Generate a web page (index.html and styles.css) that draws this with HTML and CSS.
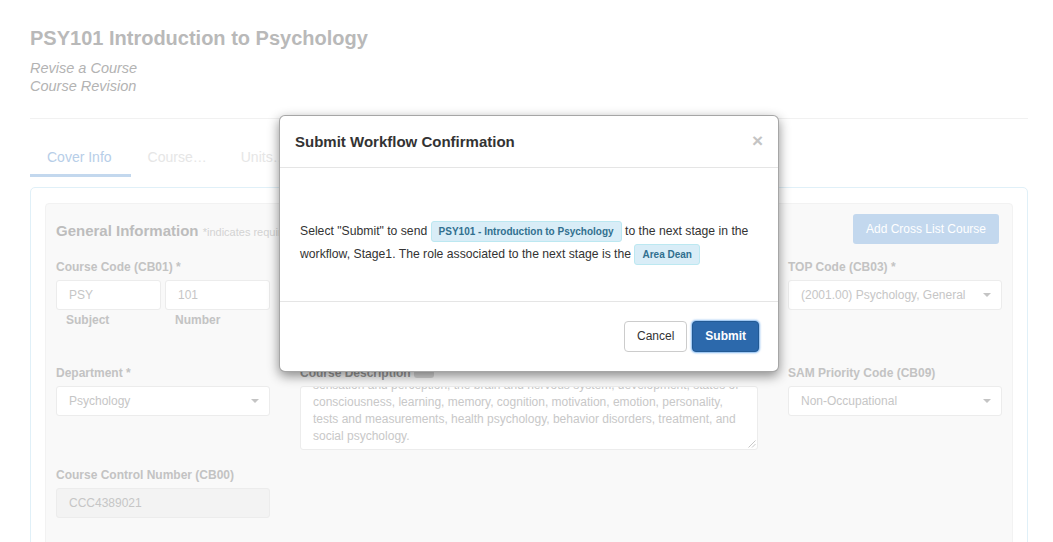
FILE: index.html
```html
<!DOCTYPE html>
<html lang="en">
<head>
<meta charset="utf-8">
<title>PSY101 Introduction to Psychology</title>
<link rel="stylesheet" href="styles.css">
</head>
<body>
<div class="page">
  <header class="page-head">
    <h1 class="title">PSY101 Introduction to Psychology</h1>
    <div class="subtitle">Revise a Course</div>
    <div class="subtitle">Course Revision</div>
  </header>
  <hr class="rule">
  <nav class="tabs">
    <div class="tab tab-active">Cover Info</div>
    <div class="tab">Course…</div>
    <div class="tab">Units…</div>
  </nav>
  <section class="card">
    <div class="panel">
      <div class="row-head">
        <h2 class="section-title">General Information <span class="req-note">*indicates required field</span></h2>
        <button class="btn-cross" type="button">Add Cross List Course</button>
      </div>
      <div class="grid row-2">
        <div class="field">
          <label class="label">Course Code (CB01) *</label>
          <div class="pair">
            <div class="pair-item">
              <div class="input">PSY</div>
              <div class="sublabel">Subject</div>
            </div>
            <div class="pair-item">
              <div class="input">101</div>
              <div class="sublabel">Number</div>
            </div>
          </div>
        </div>
        <div class="field"></div>
        <div class="field">
          <label class="label">TOP Code (CB03) *</label>
          <div class="input select"><span>(2001.00) Psychology, General</span><span class="caret"></span></div>
        </div>
      </div>
      <div class="grid row-3">
        <div class="field">
          <label class="label">Department *</label>
          <div class="input select"><span>Psychology</span><span class="caret"></span></div>
        </div>
        <div class="field">
          <label class="label label-dark">Course Description <span class="mini-badge"></span></label>
          <div class="textarea">
            <div class="textarea-text">
              <div>sensation and perception, the brain and nervous system, development, states of</div>
              <div>consciousness, learning, memory, cognition, motivation, emotion, personality,</div>
              <div>tests and measurements, health psychology, behavior disorders, treatment, and</div>
              <div>social psychology.</div>
            </div>
            <svg class="grip" width="9" height="9" viewBox="0 0 9 9"><path d="M8.5 1.5 L1.5 8.5 M8.5 5 L5 8.5" stroke="#c8c8c8" stroke-width="1" fill="none"/></svg>
          </div>
        </div>
        <div class="field">
          <label class="label">SAM Priority Code (CB09)</label>
          <div class="input select"><span>Non-Occupational</span><span class="caret"></span></div>
        </div>
      </div>
      <div class="grid row-4">
        <div class="field">
          <label class="label">Course Control Number (CB00)</label>
          <div class="input input-disabled">CCC4389021</div>
        </div>
      </div>
    </div>
  </section>

  <div class="modal" role="dialog">
    <div class="modal-header">
      <h3 class="modal-title">Submit Workflow Confirmation</h3>
      <span class="close">×</span>
    </div>
    <div class="modal-body">
      Select "Submit" to send <span class="badge">PSY101 - Introduction to Psychology</span> to the next stage in the workflow, Stage1. The role associated to the next stage is the <span class="badge">Area Dean</span>
    </div>
    <div class="modal-footer">
      <button class="btn btn-default" type="button">Cancel</button>
      <button class="btn btn-primary" type="button">Submit</button>
    </div>
  </div>
</div>
</body>
</html>
```

FILE: styles.css
```css
* { box-sizing: border-box; }

html, body {
  margin: 0;
  background: #ffffff;
  font-family: "Liberation Sans", Arial, sans-serif;
  overflow: hidden;
}

.page {
  position: relative;
  padding: 26px 25px 40px 30px;
  min-height: 542px;
}

.title {
  margin: 0;
  font-size: 20px;
  line-height: 24px;
  font-weight: bold;
  color: #b9b9b9;
}

.page-head .title { margin-bottom: 9px; }

.subtitle {
  font-size: 14.5px;
  line-height: 18px;
  font-style: italic;
  color: #b3b3b3;
}

.rule {
  margin: 23px 0 0 0;
  border: 0;
  border-top: 1px solid #f1f1f1;
  height: 0;
}

.tabs {
  display: flex;
  margin-top: 28px;
}

.tab {
  padding: 0 17px 7px 17px;
  font-size: 14px;
  line-height: 20px;
  color: #e6e6e6;
  border-bottom: 3px solid transparent;
}

.tab-active {
  padding: 0 19px 7px 17px;
  color: #b7cee8;
  border-bottom-color: #c3d8ee;
}

.card {
  margin-top: 10px;
  border: 1px solid #e0f0f8;
  border-radius: 5px;
  padding: 15px 14px 14px 14px;
}

.panel {
  background: #f9f9f9;
  border: 1px solid #f2f2f2;
  border-radius: 4px;
  padding: 10px 10px 40px 10px;
}

.row-head {
  display: flex;
  justify-content: space-between;
  align-items: flex-start;
  height: 30px;
}

.section-title {
  margin: 7px 0 0 0;
  font-size: 15px;
  line-height: 20px;
  font-weight: bold;
  color: #bdbdbd;
}

.req-note {
  font-size: 11px;
  font-weight: normal;
  color: #d3d3d3;
}

.btn-cross {
  margin-right: 3px;
  height: 30px;
  padding: 0 13px;
  border: 0;
  border-radius: 3px;
  background: #c3d8ee;
  color: #ffffff;
  font-family: "Liberation Sans", Arial, sans-serif;
  font-size: 12px;
}

.grid {
  display: grid;
  grid-template-columns: 214px 1fr 214px;
  column-gap: 30px;
}

.row-2 { margin-top: 15px; }
.row-3 { margin-top: 37px; }
.row-4 { margin-top: 17px; }

.label {
  display: block;
  font-size: 12px;
  line-height: 16px;
  font-weight: bold;
  color: #c3c3c3;
  margin-bottom: 5px;
  white-space: nowrap;
}

.label-dark { color: #9a9a9a; }

.mini-badge {
  display: inline-block;
  width: 20px;
  height: 8px;
  border-radius: 3px;
  background: #d6d6d6;
  vertical-align: middle;
}

.input {
  height: 30px;
  background: #ffffff;
  border: 1px solid #ececec;
  border-radius: 3px;
  padding: 0 12px;
  font-size: 12px;
  line-height: 28px;
  color: #c6c6c6;
  white-space: nowrap;
  overflow: hidden;
}

.input-disabled { background: #f3f3f3; }

.select {
  display: flex;
  align-items: center;
  justify-content: space-between;
  padding-right: 10px;
}

.caret {
  width: 0;
  height: 0;
  border-left: 4px solid transparent;
  border-right: 4px solid transparent;
  border-top: 4px solid #c4c4c4;
}

.pair {
  display: grid;
  grid-template-columns: 1fr 1fr;
  column-gap: 4px;
}

.sublabel {
  margin-top: 2px;
  padding-left: 10px;
  font-size: 12px;
  line-height: 16px;
  font-weight: bold;
  color: #c3c3c3;
}

.textarea {
  position: relative;
  height: 64px;
  background: #ffffff;
  border: 1px solid #ececec;
  border-radius: 3px;
  padding: 0 12px;
  overflow: hidden;
}

.textarea-text {
  margin-top: -10px;
  font-size: 12px;
  line-height: 17px;
  color: #c8c8c8;
  white-space: nowrap;
}

.grip {
  position: absolute;
  right: 1px;
  bottom: 1px;
}

/* Modal dialog lying over the page */
.modal {
  position: absolute;
  top: 115px;
  left: 279px;
  width: 500px;
  background: #ffffff;
  border: 1px solid rgba(0, 0, 0, 0.35);
  border-radius: 6px;
  box-shadow: 0 4px 12px rgba(0, 0, 0, 0.45);
}

.modal-header {
  display: flex;
  justify-content: space-between;
  align-items: center;
  padding: 16px 15px 15px 15px;
  border-bottom: 1px solid #e5e5e5;
}

.modal-title {
  margin: 0;
  font-size: 15px;
  line-height: 20px;
  font-weight: bold;
  color: #333333;
}

.close {
  font-size: 19px;
  line-height: 20px;
  font-weight: bold;
  color: #c4c4c4;
  margin-top: -2px;
}

.modal-body {
  padding: 52px 16px 35px 20px;
  font-size: 12.2px;
  line-height: 23px;
  color: #333333;
}

.badge {
  display: inline-block;
  height: 21px;
  padding: 0 7px;
  background: #d9edf7;
  border: 1px solid #bce8f1;
  border-radius: 3px;
  color: #31708f;
  font-size: 10px;
  font-weight: bold;
  line-height: 19px;
  vertical-align: middle;
}

.modal-footer {
  display: flex;
  justify-content: flex-end;
  gap: 5px;
  padding: 19px 19px 19px 15px;
  border-top: 1px solid #e5e5e5;
}

.btn {
  height: 31px;
  padding: 0 12px;
  border-radius: 4px;
  font-family: "Liberation Sans", Arial, sans-serif;
  font-size: 12px;
  line-height: 29px;
}

.btn-default {
  background: #ffffff;
  border: 1px solid #cccccc;
  color: #333333;
}

.btn-primary {
  background: #2c69ac;
  border: 1px solid #235a94;
  color: #ffffff;
  font-weight: bold;
  box-shadow: 0 0 2px 1px rgba(90, 160, 235, 0.75);
}
```
